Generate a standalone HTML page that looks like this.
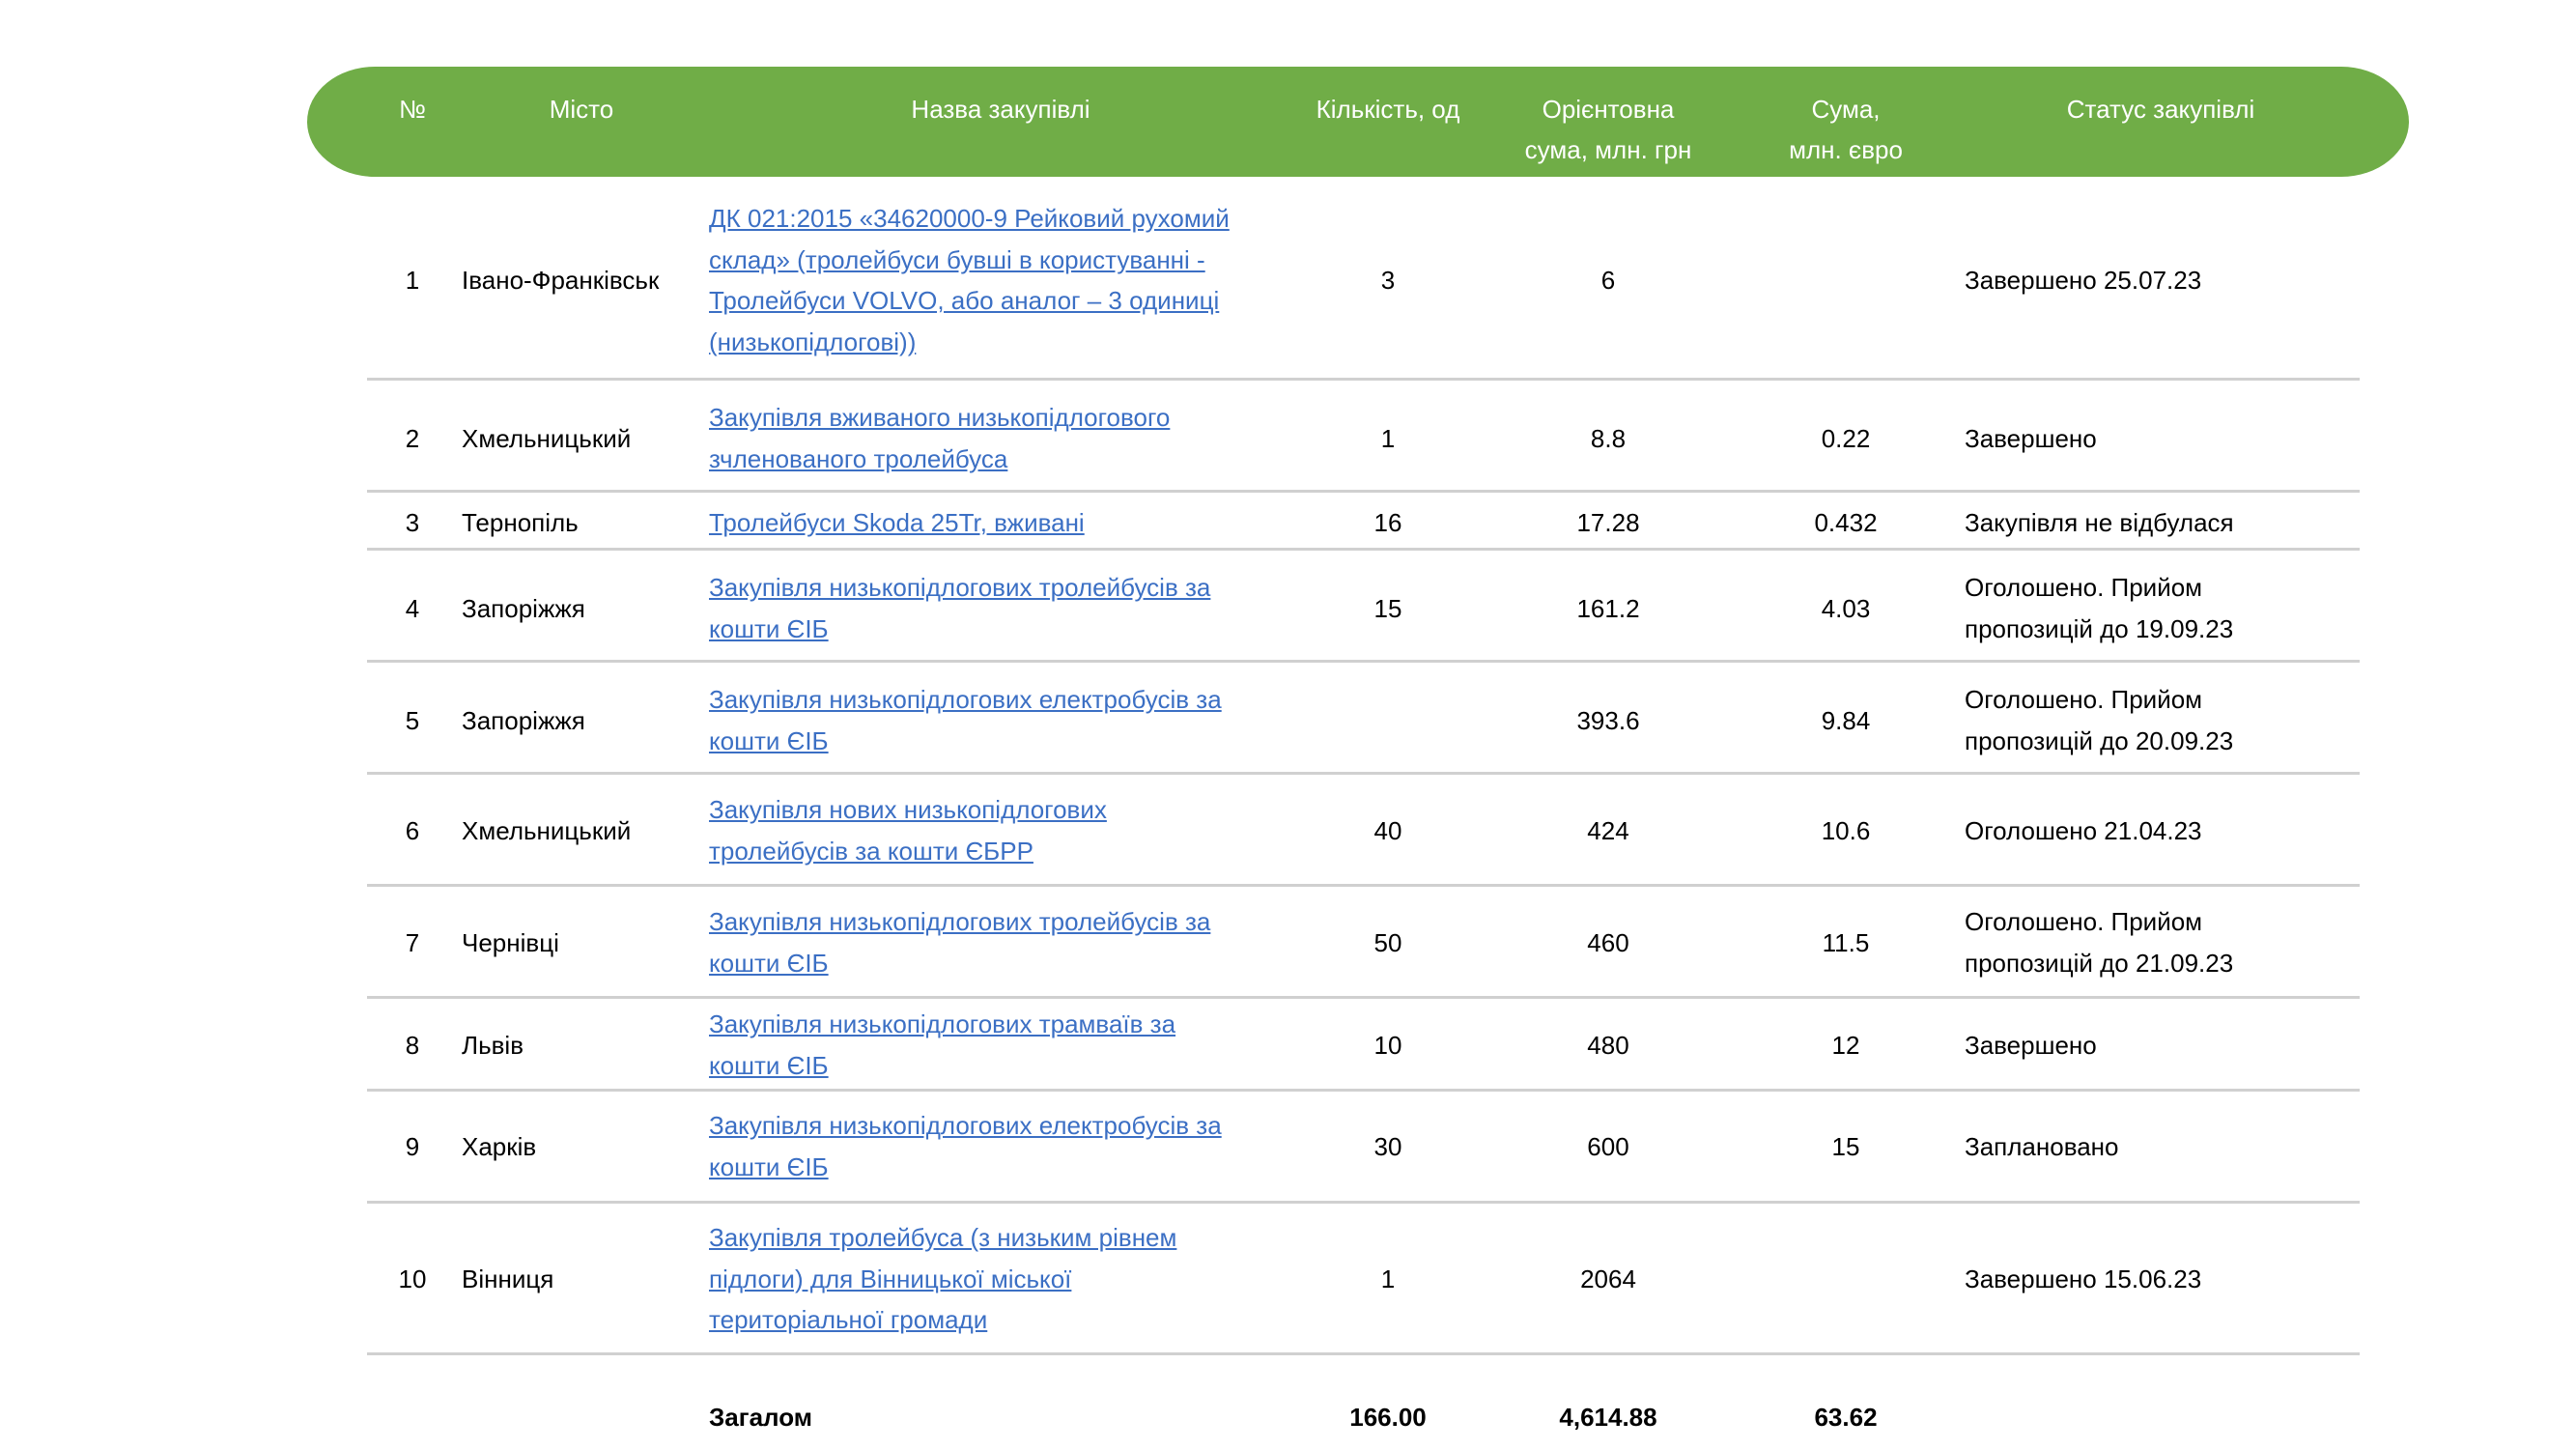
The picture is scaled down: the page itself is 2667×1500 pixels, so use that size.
<!DOCTYPE html>
<html><head><meta charset="utf-8">
<style>
body{margin:0;width:2667px;height:1500px;background:#fff;position:relative;overflow:hidden;font-family:"Liberation Sans","DejaVu Sans",sans-serif;font-size:26px;color:#000}
.bar{position:absolute;left:318px;top:69px;width:2176px;height:114px;background:#70ad47;border-radius:70px/57px}
.h{position:absolute;color:#fff;white-space:nowrap;line-height:42px;text-align:center;transform:translateX(-50%)}
.ln{position:absolute;left:380px;width:2063px;height:3px;background:#d0d0d0}
.t{position:absolute;white-space:nowrap;line-height:42.7px}
.c{transform:translateX(-50%);text-align:center}
a{color:#3b6fc4;text-decoration:underline}
b{font-weight:bold}
</style></head><body>
<div class="bar"></div>
<div class="h" style="left:427px;top:92px">№</div>
<div class="h" style="left:602px;top:92px">Місто</div>
<div class="h" style="left:1036px;top:92px">Назва закупівлі</div>
<div class="h" style="left:1437px;top:92px">Кількість, од</div>
<div class="h" style="left:1665px;top:92px">Орієнтовна<br>сума, млн. грн</div>
<div class="h" style="left:1911px;top:92px">Сума,<br>млн. євро</div>
<div class="h" style="left:2237px;top:92px">Статус закупівлі</div>

<div class="ln" style="top:391px"></div>
<div class="ln" style="top:507px"></div>
<div class="ln" style="top:567px"></div>
<div class="ln" style="top:683px"></div>
<div class="ln" style="top:799px"></div>
<div class="ln" style="top:915px"></div>
<div class="ln" style="top:1031px"></div>
<div class="ln" style="top:1127px"></div>
<div class="ln" style="top:1243px"></div>
<div class="ln" style="top:1400px"></div>

<!-- row 1 center 290 -->
<div class="t c" style="left:427px;top:269px">1</div>
<div class="t" style="left:478px;top:269px">Івано-Франківськ</div>
<div class="t" style="left:734px;top:205px"><a>ДК 021:2015 «34620000-9 Рейковий рухомий<br>склад» (тролейбуси бувші в користуванні -<br>Тролейбуси VOLVO, або аналог – 3 одиниці<br>(низькопідлогові))</a></div>
<div class="t c" style="left:1437px;top:269px">3</div>
<div class="t c" style="left:1665px;top:269px">6</div>
<div class="t" style="left:2034px;top:269px">Завершено 25.07.23</div>

<!-- row 2 center 454 -->
<div class="t c" style="left:427px;top:433px">2</div>
<div class="t" style="left:478px;top:433px">Хмельницький</div>
<div class="t" style="left:734px;top:411px"><a>Закупівля вживаного низькопідлогового<br>зчленованого тролейбуса</a></div>
<div class="t c" style="left:1437px;top:433px">1</div>
<div class="t c" style="left:1665px;top:433px">8.8</div>
<div class="t c" style="left:1911px;top:433px">0.22</div>
<div class="t" style="left:2034px;top:433px">Завершено</div>

<!-- row 3 center 541 -->
<div class="t c" style="left:427px;top:520px">3</div>
<div class="t" style="left:478px;top:520px">Тернопіль</div>
<div class="t" style="left:734px;top:520px"><a>Тролейбуси Skoda 25Tr, вживані</a></div>
<div class="t c" style="left:1437px;top:520px">16</div>
<div class="t c" style="left:1665px;top:520px">17.28</div>
<div class="t c" style="left:1911px;top:520px">0.432</div>
<div class="t" style="left:2034px;top:520px">Закупівля не відбулася</div>

<!-- row 4 center 630 -->
<div class="t c" style="left:427px;top:609px">4</div>
<div class="t" style="left:478px;top:609px">Запоріжжя</div>
<div class="t" style="left:734px;top:587px"><a>Закупівля низькопідлогових тролейбусів за<br>кошти ЄІБ</a></div>
<div class="t c" style="left:1437px;top:609px">15</div>
<div class="t c" style="left:1665px;top:609px">161.2</div>
<div class="t c" style="left:1911px;top:609px">4.03</div>
<div class="t" style="left:2034px;top:587px">Оголошено. Прийом<br>пропозицій до 19.09.23</div>

<!-- row 5 center 746 -->
<div class="t c" style="left:427px;top:725px">5</div>
<div class="t" style="left:478px;top:725px">Запоріжжя</div>
<div class="t" style="left:734px;top:703px"><a>Закупівля низькопідлогових електробусів за<br>кошти ЄІБ</a></div>
<div class="t c" style="left:1665px;top:725px">393.6</div>
<div class="t c" style="left:1911px;top:725px">9.84</div>
<div class="t" style="left:2034px;top:703px">Оголошено. Прийом<br>пропозицій до 20.09.23</div>

<!-- row 6 center 860 -->
<div class="t c" style="left:427px;top:839px">6</div>
<div class="t" style="left:478px;top:839px">Хмельницький</div>
<div class="t" style="left:734px;top:817px"><a>Закупівля нових низькопідлогових<br>тролейбусів за кошти ЄБРР</a></div>
<div class="t c" style="left:1437px;top:839px">40</div>
<div class="t c" style="left:1665px;top:839px">424</div>
<div class="t c" style="left:1911px;top:839px">10.6</div>
<div class="t" style="left:2034px;top:839px">Оголошено 21.04.23</div>

<!-- row 7 center 976 -->
<div class="t c" style="left:427px;top:955px">7</div>
<div class="t" style="left:478px;top:955px">Чернівці</div>
<div class="t" style="left:734px;top:933px"><a>Закупівля низькопідлогових тролейбусів за<br>кошти ЄІБ</a></div>
<div class="t c" style="left:1437px;top:955px">50</div>
<div class="t c" style="left:1665px;top:955px">460</div>
<div class="t c" style="left:1911px;top:955px">11.5</div>
<div class="t" style="left:2034px;top:933px">Оголошено. Прийом<br>пропозицій до 21.09.23</div>

<!-- row 8 center 1082 -->
<div class="t c" style="left:427px;top:1061px">8</div>
<div class="t" style="left:478px;top:1061px">Львів</div>
<div class="t" style="left:734px;top:1039px"><a>Закупівля низькопідлогових трамваїв за<br>кошти ЄІБ</a></div>
<div class="t c" style="left:1437px;top:1061px">10</div>
<div class="t c" style="left:1665px;top:1061px">480</div>
<div class="t c" style="left:1911px;top:1061px">12</div>
<div class="t" style="left:2034px;top:1061px">Завершено</div>

<!-- row 9 center 1187 -->
<div class="t c" style="left:427px;top:1166px">9</div>
<div class="t" style="left:478px;top:1166px">Харків</div>
<div class="t" style="left:734px;top:1144px"><a>Закупівля низькопідлогових електробусів за<br>кошти ЄІБ</a></div>
<div class="t c" style="left:1437px;top:1166px">30</div>
<div class="t c" style="left:1665px;top:1166px">600</div>
<div class="t c" style="left:1911px;top:1166px">15</div>
<div class="t" style="left:2034px;top:1166px">Заплановано</div>

<!-- row 10 center 1324 -->
<div class="t c" style="left:427px;top:1303px">10</div>
<div class="t" style="left:478px;top:1303px">Вінниця</div>
<div class="t" style="left:734px;top:1260px"><a>Закупівля тролейбуса (з низьким рівнем<br>підлоги) для Вінницької міської<br>територіальної громади</a></div>
<div class="t c" style="left:1437px;top:1303px">1</div>
<div class="t c" style="left:1665px;top:1303px">2064</div>
<div class="t" style="left:2034px;top:1303px">Завершено 15.06.23</div>

<!-- total center 1467 -->
<div class="t" style="left:734px;top:1446px"><b>Загалом</b></div>
<div class="t c" style="left:1437px;top:1446px"><b>166.00</b></div>
<div class="t c" style="left:1665px;top:1446px"><b>4,614.88</b></div>
<div class="t c" style="left:1911px;top:1446px"><b>63.62</b></div>
</body></html>
